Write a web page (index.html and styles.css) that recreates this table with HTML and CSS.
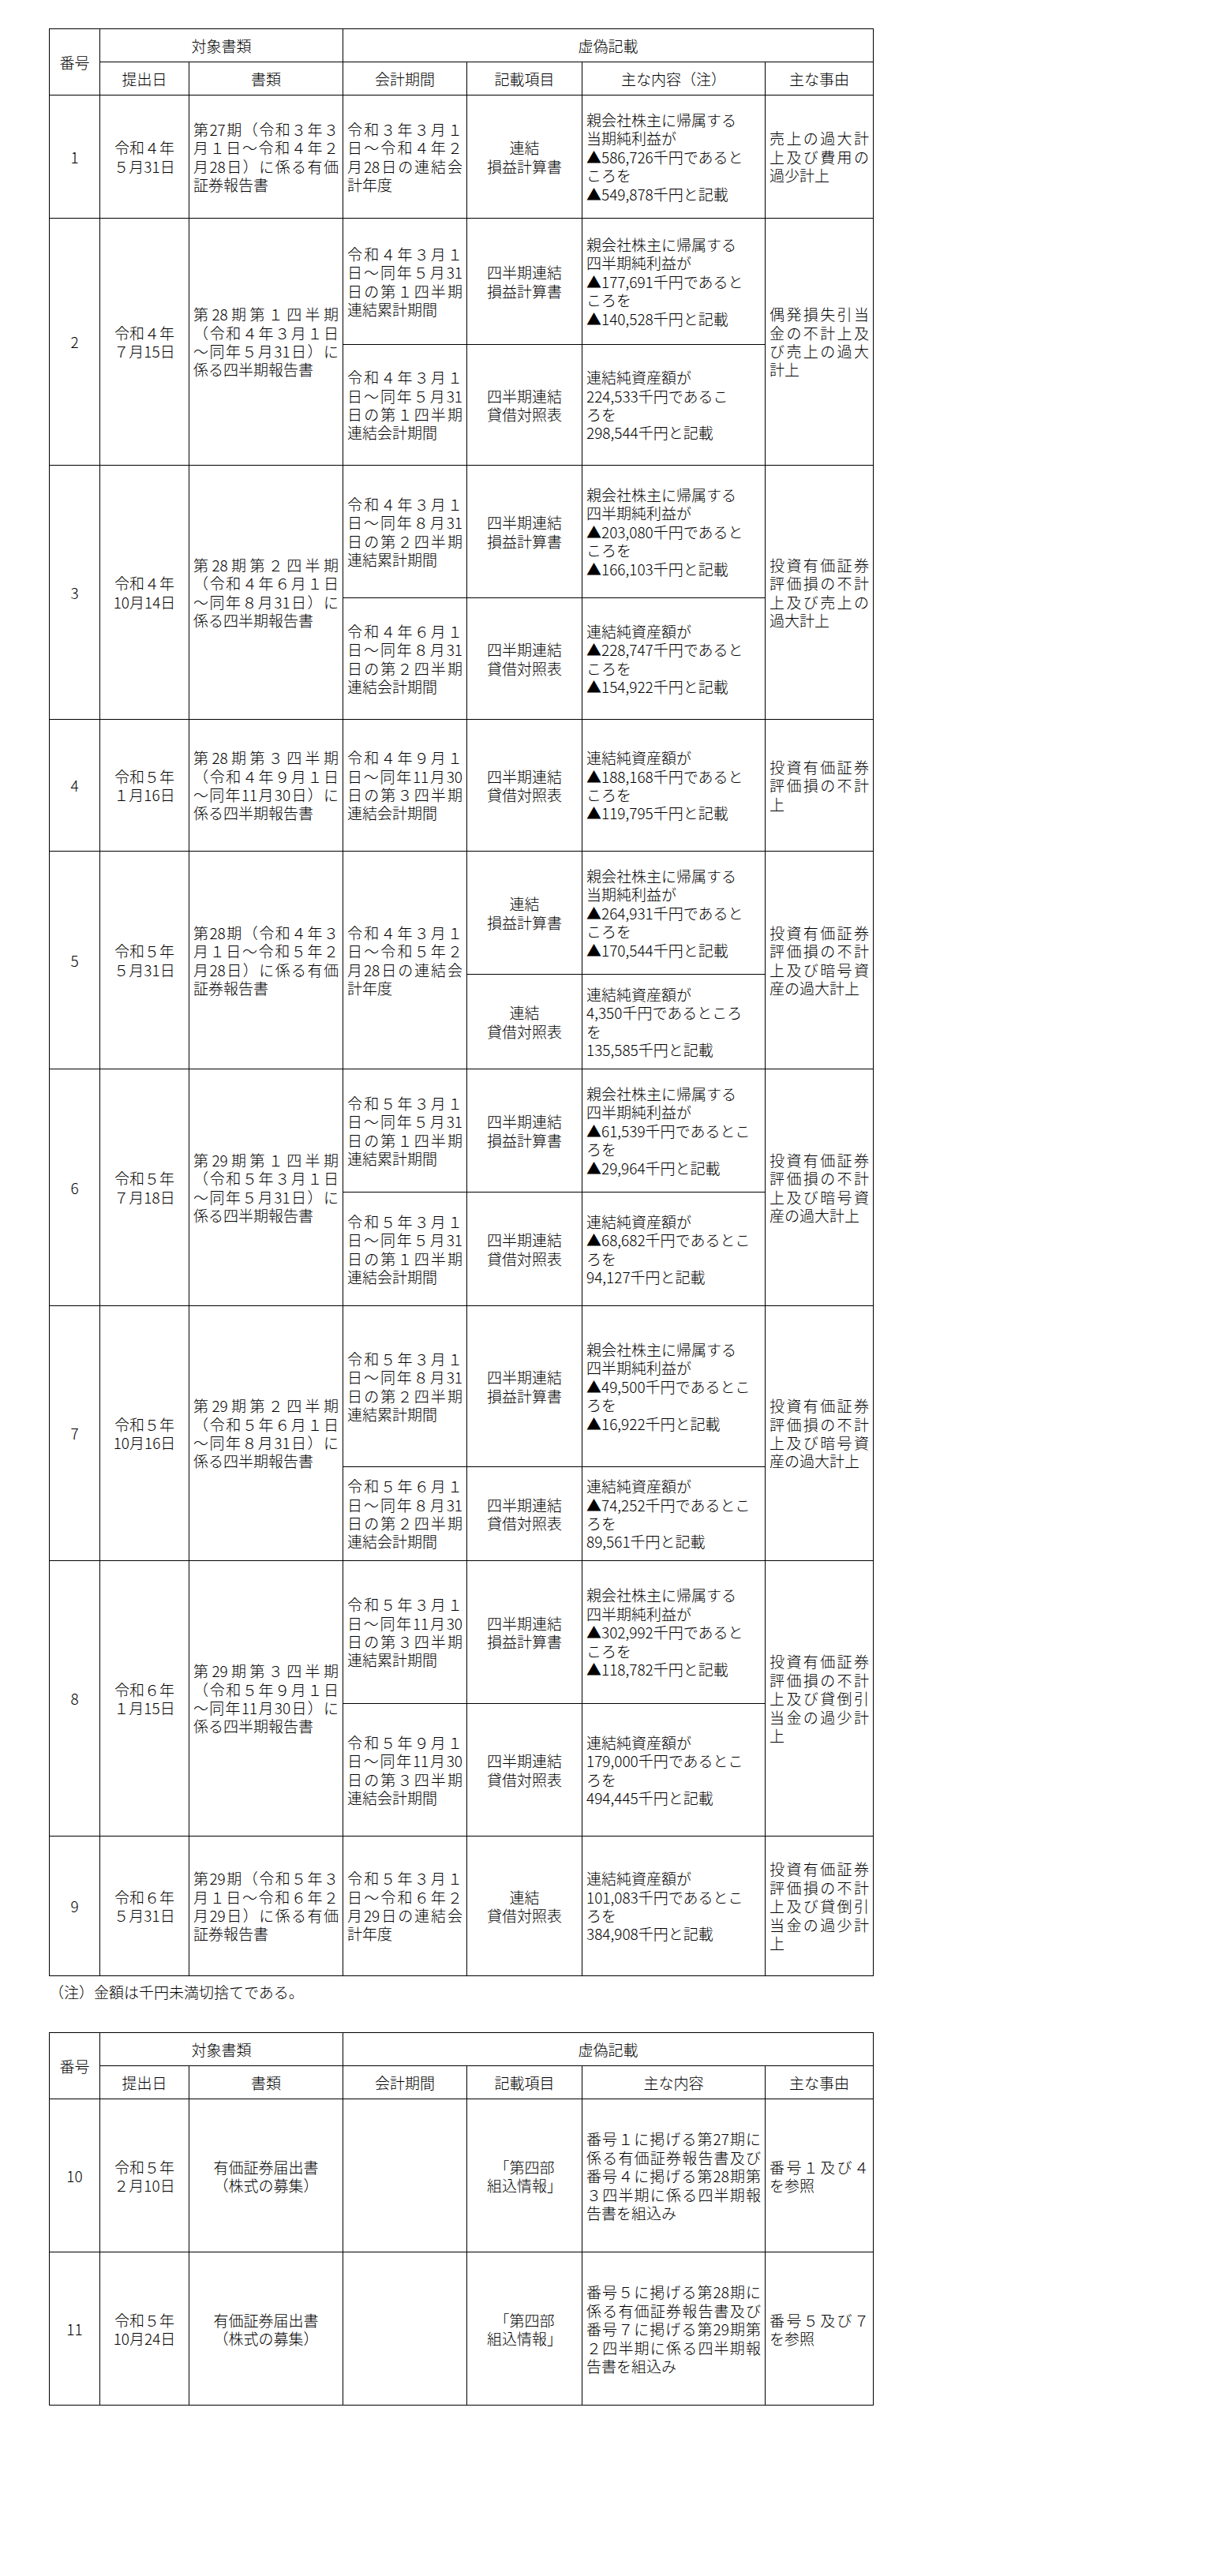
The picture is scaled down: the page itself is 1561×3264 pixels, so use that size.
FILE: index.html
```html
<!DOCTYPE html>
<html lang="ja">
<head>
<meta charset="utf-8">
<title>虚偽記載</title>
<link rel="stylesheet" href="styles.css">
</head>
<body>
<div class="page">
<table class="t">
<colgroup><col class="w1"><col class="w2"><col class="w3"><col class="w4"><col class="w5"><col class="w6"><col class="w7"></colgroup>
<tr class="r42"><th rowspan="2">番号</th><th colspan="2">対象書類</th><th colspan="4">虚偽記載</th></tr>
<tr class="r42"><th>提出日</th><th>書類</th><th>会計期間</th><th>記載項目</th><th>主な内容（注）</th><th>主な事由</th></tr>

<tr class="r156">
<td class="c">1</td>
<td class="c"><span class="ln">令和４年</span><span class="ln">５月31日</span></td>
<td><span class="ln j">第27期（令和３年３</span><span class="ln j">月１日～令和４年２</span><span class="ln j">月28日）に係る有価</span><span class="ln">証券報告書</span></td>
<td><span class="ln j">令和３年３月１</span><span class="ln j">日～令和４年２</span><span class="ln j">月28日の連結会</span><span class="ln">計年度</span></td>
<td class="c"><span class="ln">連結</span><span class="ln">損益計算書</span></td>
<td><span class="ln">親会社株主に帰属する</span><span class="ln">当期純利益が</span><span class="ln">▲586,726千円であると</span><span class="ln">ころを</span><span class="ln">▲549,878千円と記載</span></td>
<td><span class="ln j">売上の過大計</span><span class="ln j">上及び費用の</span><span class="ln">過少計上</span></td>
</tr>

<tr class="r160">
<td class="c" rowspan="2">2</td>
<td class="c" rowspan="2"><span class="ln">令和４年</span><span class="ln">７月15日</span></td>
<td rowspan="2"><span class="ln j">第28期第１四半期</span><span class="ln j">（令和４年３月１日</span><span class="ln j">～同年５月31日）に</span><span class="ln">係る四半期報告書</span></td>
<td><span class="ln j">令和４年３月１</span><span class="ln j">日～同年５月31</span><span class="ln j">日の第１四半期</span><span class="ln">連結累計期間</span></td>
<td class="c"><span class="ln">四半期連結</span><span class="ln">損益計算書</span></td>
<td><span class="ln">親会社株主に帰属する</span><span class="ln">四半期純利益が</span><span class="ln">▲177,691千円であると</span><span class="ln">ころを</span><span class="ln">▲140,528千円と記載</span></td>
<td rowspan="2"><span class="ln j">偶発損失引当</span><span class="ln j">金の不計上及</span><span class="ln j">び売上の過大</span><span class="ln">計上</span></td>
</tr>
<tr class="r153">
<td><span class="ln j">令和４年３月１</span><span class="ln j">日～同年５月31</span><span class="ln j">日の第１四半期</span><span class="ln">連結会計期間</span></td>
<td class="c"><span class="ln">四半期連結</span><span class="ln">貸借対照表</span></td>
<td><span class="ln">連結純資産額が</span><span class="ln">224,533千円であるこ</span><span class="ln">ろを</span><span class="ln">298,544千円と記載</span></td>
</tr>

<tr class="r168">
<td class="c" rowspan="2">3</td>
<td class="c" rowspan="2"><span class="ln">令和４年</span><span class="ln">10月14日</span></td>
<td rowspan="2"><span class="ln j">第28期第２四半期</span><span class="ln j">（令和４年６月１日</span><span class="ln j">～同年８月31日）に</span><span class="ln">係る四半期報告書</span></td>
<td><span class="ln j">令和４年３月１</span><span class="ln j">日～同年８月31</span><span class="ln j">日の第２四半期</span><span class="ln">連結累計期間</span></td>
<td class="c"><span class="ln">四半期連結</span><span class="ln">損益計算書</span></td>
<td><span class="ln">親会社株主に帰属する</span><span class="ln">四半期純利益が</span><span class="ln">▲203,080千円であると</span><span class="ln">ころを</span><span class="ln">▲166,103千円と記載</span></td>
<td rowspan="2"><span class="ln j">投資有価証券</span><span class="ln j">評価損の不計</span><span class="ln j">上及び売上の</span><span class="ln">過大計上</span></td>
</tr>
<tr class="r154">
<td><span class="ln j">令和４年６月１</span><span class="ln j">日～同年８月31</span><span class="ln j">日の第２四半期</span><span class="ln">連結会計期間</span></td>
<td class="c"><span class="ln">四半期連結</span><span class="ln">貸借対照表</span></td>
<td><span class="ln">連結純資産額が</span><span class="ln">▲228,747千円であると</span><span class="ln">ころを</span><span class="ln">▲154,922千円と記載</span></td>
</tr>

<tr class="r167">
<td class="c">4</td>
<td class="c"><span class="ln">令和５年</span><span class="ln">１月16日</span></td>
<td><span class="ln j">第28期第３四半期</span><span class="ln j">（令和４年９月１日</span><span class="ln j">～同年11月30日）に</span><span class="ln">係る四半期報告書</span></td>
<td><span class="ln j">令和４年９月１</span><span class="ln j">日～同年11月30</span><span class="ln j">日の第３四半期</span><span class="ln">連結会計期間</span></td>
<td class="c"><span class="ln">四半期連結</span><span class="ln">貸借対照表</span></td>
<td><span class="ln">連結純資産額が</span><span class="ln">▲188,168千円であると</span><span class="ln">ころを</span><span class="ln">▲119,795千円と記載</span></td>
<td><span class="ln j">投資有価証券</span><span class="ln j">評価損の不計</span><span class="ln">上</span></td>
</tr>

<tr class="r156">
<td class="c" rowspan="2">5</td>
<td class="c" rowspan="2"><span class="ln">令和５年</span><span class="ln">５月31日</span></td>
<td rowspan="2"><span class="ln j">第28期（令和４年３</span><span class="ln j">月１日～令和５年２</span><span class="ln j">月28日）に係る有価</span><span class="ln">証券報告書</span></td>
<td rowspan="2"><span class="ln j">令和４年３月１</span><span class="ln j">日～令和５年２</span><span class="ln j">月28日の連結会</span><span class="ln">計年度</span></td>
<td class="c"><span class="ln">連結</span><span class="ln">損益計算書</span></td>
<td><span class="ln">親会社株主に帰属する</span><span class="ln">当期純利益が</span><span class="ln">▲264,931千円であると</span><span class="ln">ころを</span><span class="ln">▲170,544千円と記載</span></td>
<td rowspan="2"><span class="ln j">投資有価証券</span><span class="ln j">評価損の不計</span><span class="ln j">上及び暗号資</span><span class="ln">産の過大計上</span></td>
</tr>
<tr class="r120">
<td class="c"><span class="ln">連結</span><span class="ln">貸借対照表</span></td>
<td><span class="ln">連結純資産額が</span><span class="ln">4,350千円であるところ</span><span class="ln">を</span><span class="ln">135,585千円と記載</span></td>
</tr>

<tr class="r156">
<td class="c" rowspan="2">6</td>
<td class="c" rowspan="2"><span class="ln">令和５年</span><span class="ln">７月18日</span></td>
<td rowspan="2"><span class="ln j">第29期第１四半期</span><span class="ln j">（令和５年３月１日</span><span class="ln j">～同年５月31日）に</span><span class="ln">係る四半期報告書</span></td>
<td><span class="ln j">令和５年３月１</span><span class="ln j">日～同年５月31</span><span class="ln j">日の第１四半期</span><span class="ln">連結累計期間</span></td>
<td class="c"><span class="ln">四半期連結</span><span class="ln">損益計算書</span></td>
<td><span class="ln">親会社株主に帰属する</span><span class="ln">四半期純利益が</span><span class="ln">▲61,539千円であるとこ</span><span class="ln">ろを</span><span class="ln">▲29,964千円と記載</span></td>
<td rowspan="2"><span class="ln j">投資有価証券</span><span class="ln j">評価損の不計</span><span class="ln j">上及び暗号資</span><span class="ln">産の過大計上</span></td>
</tr>
<tr class="r144">
<td><span class="ln j">令和５年３月１</span><span class="ln j">日～同年５月31</span><span class="ln j">日の第１四半期</span><span class="ln">連結会計期間</span></td>
<td class="c"><span class="ln">四半期連結</span><span class="ln">貸借対照表</span></td>
<td><span class="ln">連結純資産額が</span><span class="ln">▲68,682千円であるとこ</span><span class="ln">ろを</span><span class="ln">94,127千円と記載</span></td>
</tr>

<tr class="r204">
<td class="c" rowspan="2">7</td>
<td class="c" rowspan="2"><span class="ln">令和５年</span><span class="ln">10月16日</span></td>
<td rowspan="2"><span class="ln j">第29期第２四半期</span><span class="ln j">（令和５年６月１日</span><span class="ln j">～同年８月31日）に</span><span class="ln">係る四半期報告書</span></td>
<td><span class="ln j">令和５年３月１</span><span class="ln j">日～同年８月31</span><span class="ln j">日の第２四半期</span><span class="ln">連結累計期間</span></td>
<td class="c"><span class="ln">四半期連結</span><span class="ln">損益計算書</span></td>
<td><span class="ln">親会社株主に帰属する</span><span class="ln">四半期純利益が</span><span class="ln">▲49,500千円であるとこ</span><span class="ln">ろを</span><span class="ln">▲16,922千円と記載</span></td>
<td rowspan="2"><span class="ln j">投資有価証券</span><span class="ln j">評価損の不計</span><span class="ln j">上及び暗号資</span><span class="ln">産の過大計上</span></td>
</tr>
<tr class="r119">
<td><span class="ln j">令和５年６月１</span><span class="ln j">日～同年８月31</span><span class="ln j">日の第２四半期</span><span class="ln">連結会計期間</span></td>
<td class="c"><span class="ln">四半期連結</span><span class="ln">貸借対照表</span></td>
<td><span class="ln">連結純資産額が</span><span class="ln">▲74,252千円であるとこ</span><span class="ln">ろを</span><span class="ln">89,561千円と記載</span></td>
</tr>

<tr class="r181">
<td class="c" rowspan="2">8</td>
<td class="c" rowspan="2"><span class="ln">令和６年</span><span class="ln">１月15日</span></td>
<td rowspan="2"><span class="ln j">第29期第３四半期</span><span class="ln j">（令和５年９月１日</span><span class="ln j">～同年11月30日）に</span><span class="ln">係る四半期報告書</span></td>
<td><span class="ln j">令和５年３月１</span><span class="ln j">日～同年11月30</span><span class="ln j">日の第３四半期</span><span class="ln">連結累計期間</span></td>
<td class="c"><span class="ln">四半期連結</span><span class="ln">損益計算書</span></td>
<td><span class="ln">親会社株主に帰属する</span><span class="ln">四半期純利益が</span><span class="ln">▲302,992千円であると</span><span class="ln">ころを</span><span class="ln">▲118,782千円と記載</span></td>
<td rowspan="2"><span class="ln j">投資有価証券</span><span class="ln j">評価損の不計</span><span class="ln j">上及び貸倒引</span><span class="ln j">当金の過少計</span><span class="ln">上</span></td>
</tr>
<tr class="r168">
<td><span class="ln j">令和５年９月１</span><span class="ln j">日～同年11月30</span><span class="ln j">日の第３四半期</span><span class="ln">連結会計期間</span></td>
<td class="c"><span class="ln">四半期連結</span><span class="ln">貸借対照表</span></td>
<td><span class="ln">連結純資産額が</span><span class="ln">179,000千円であるとこ</span><span class="ln">ろを</span><span class="ln">494,445千円と記載</span></td>
</tr>

<tr class="r177">
<td class="c">9</td>
<td class="c"><span class="ln">令和６年</span><span class="ln">５月31日</span></td>
<td><span class="ln j">第29期（令和５年３</span><span class="ln j">月１日～令和６年２</span><span class="ln j">月29日）に係る有価</span><span class="ln">証券報告書</span></td>
<td><span class="ln j">令和５年３月１</span><span class="ln j">日～令和６年２</span><span class="ln j">月29日の連結会</span><span class="ln">計年度</span></td>
<td class="c"><span class="ln">連結</span><span class="ln">貸借対照表</span></td>
<td><span class="ln">連結純資産額が</span><span class="ln">101,083千円であるとこ</span><span class="ln">ろを</span><span class="ln">384,908千円と記載</span></td>
<td><span class="ln j">投資有価証券</span><span class="ln j">評価損の不計</span><span class="ln j">上及び貸倒引</span><span class="ln j">当金の過少計</span><span class="ln">上</span></td>
</tr>
</table>

<p class="note">（注）金額は千円未満切捨てである。</p>

<table class="t t2">
<colgroup><col class="w1"><col class="w2"><col class="w3"><col class="w4"><col class="w5"><col class="w6"><col class="w7"></colgroup>
<tr class="r42"><th rowspan="2">番号</th><th colspan="2">対象書類</th><th colspan="4">虚偽記載</th></tr>
<tr class="r42"><th>提出日</th><th>書類</th><th>会計期間</th><th>記載項目</th><th>主な内容</th><th>主な事由</th></tr>
<tr class="r194">
<td class="c">10</td>
<td class="c"><span class="ln">令和５年</span><span class="ln">２月10日</span></td>
<td class="c"><span class="ln">有価証券届出書</span><span class="ln">（株式の募集）</span></td>
<td></td>
<td class="c"><span class="ln">「第四部</span><span class="ln">組込情報」</span></td>
<td><span class="ln j">番号１に掲げる第27期に</span><span class="ln j">係る有価証券報告書及び</span><span class="ln j">番号４に掲げる第28期第</span><span class="ln j">３四半期に係る四半期報</span><span class="ln">告書を組込み</span></td>
<td><span class="ln j">番号１及び４</span><span class="ln">を参照</span></td>
</tr>
<tr class="r194">
<td class="c">11</td>
<td class="c"><span class="ln">令和５年</span><span class="ln">10月24日</span></td>
<td class="c"><span class="ln">有価証券届出書</span><span class="ln">（株式の募集）</span></td>
<td></td>
<td class="c"><span class="ln">「第四部</span><span class="ln">組込情報」</span></td>
<td><span class="ln j">番号５に掲げる第28期に</span><span class="ln j">係る有価証券報告書及び</span><span class="ln j">番号７に掲げる第29期第</span><span class="ln j">２四半期に係る四半期報</span><span class="ln">告書を組込み</span></td>
<td><span class="ln j">番号５及び７</span><span class="ln">を参照</span></td>
</tr>
</table>
</div>
</body>
</html>
```

FILE: styles.css
```css
html, body {
  margin: 0;
  padding: 0;
  background: #ffffff;
}
body {
  font-family: "Noto Sans CJK JP", "Noto Sans", sans-serif;
  font-size: 19px;
  font-weight: 300;
  line-height: 23.4px;
  color: #000000;
}
.page {
  padding: 36px 0 60px 62px;
}
.t {
  border-collapse: collapse;
  table-layout: fixed;
  width: 1044px;
}
.w1 { width: 64px; }
.w2 { width: 113px; }
.w3 { width: 195px; }
.w4 { width: 157px; }
.w5 { width: 146px; }
.w6 { width: 232px; }
.w7 { width: 137px; }
.t th,
.t td {
  border: 1px solid #000000;
  padding: 0 5px;
  vertical-align: middle;
  text-align: left;
  font-weight: 300;
  overflow: visible;
}
.t th {
  text-align: center;
}
.t td.c {
  text-align: center;
}
.ln {
  display: block;
  white-space: nowrap;
}
.ln.j {
  white-space: normal;
  text-align: justify;
  text-align-last: justify;
}
.r42 { height: 42px; }
.r119 { height: 119px; }
.r120 { height: 120px; }
.r144 { height: 144px; }
.r153 { height: 153px; }
.r154 { height: 154px; }
.r156 { height: 156px; }
.r160 { height: 160px; }
.r167 { height: 167px; }
.r168 { height: 168px; }
.r177 { height: 177px; }
.r181 { height: 181px; }
.r194 { height: 194px; }
.r204 { height: 204px; }
.note {
  margin: 8px 0 40px 0;
}
```
